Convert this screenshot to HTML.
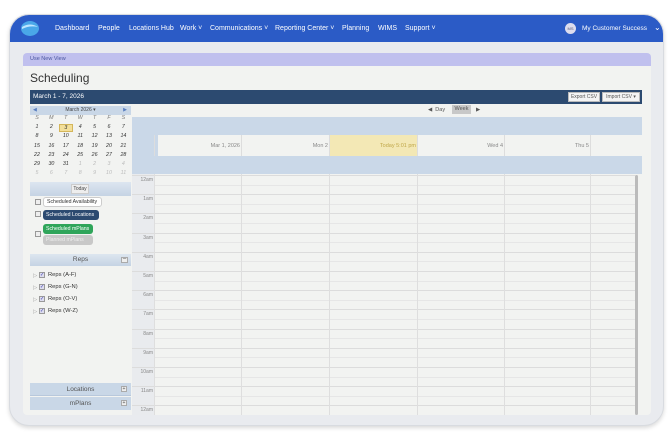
<!DOCTYPE html>
<html><head><meta charset="utf-8"><style>
*{box-sizing:border-box;margin:0;padding:0}
body{width:672px;height:438px;background:#fff;font-family:"Liberation Sans",sans-serif;position:relative;overflow:hidden}
.frame{position:absolute;left:9px;top:14px;width:655px;height:412px;border-radius:20px;background:#e9ebef;border:1px solid #d8dbe0;box-shadow:0 2px 4px rgba(0,0,0,.15);overflow:hidden}
.nav{position:absolute;left:0;top:0;right:0;height:27px;background:#2b5bc6;color:#fff;font-size:7px}
.nav span{position:absolute;top:10px}
.card{position:absolute;left:13px;top:38px;width:628px;height:362px;background:#f2f3f1;border-radius:4px;overflow:hidden}
.abs{position:absolute}
.t{position:absolute;font-size:5.5px;color:#555}
</style></head><body>
<div class="frame">
 <div class="nav">
  <svg class="abs" style="left:10px;top:5px" width="20" height="17" viewBox="0 0 20 17"><ellipse cx="10" cy="8.5" rx="9" ry="7.5" fill="#4aa7e8"/><path d="M2 7 Q10 2 18 7 Q10 5 2 9Z" fill="#bfe6ff"/></svg>
  <span style="left:45px">Dashboard</span><span style="left:88px">People</span><span style="left:119px">Locations Hub</span><span style="left:170px">Work ˅</span><span style="left:200px">Communications ˅</span><span style="left:265px">Reporting Center ˅</span><span style="left:332px">Planning</span><span style="left:368px">WIMS</span><span style="left:395px">Support ˅</span>
  <div class="abs" style="left:555px;top:8px;width:11px;height:11px;border-radius:50%;background:#dde;font-size:4px;color:#557;text-align:center;line-height:11px">MS</div>
  <span style="left:572px;font-size:6.5px">My Customer Success</span><span style="left:644px;top:8px;font-size:8px">⌄</span>
 </div>
 <div class="card">
  <div class="abs" style="left:0;top:0;width:628px;height:13px;background:#c0c0ee;font-size:5.5px;color:#4a55a0;padding:3px 7px">Use New View</div>
  <div class="abs" style="left:7px;top:18px;font-size:12px;color:#333">Scheduling</div>
  <div class="abs" style="left:7px;top:37px;width:612px;height:14px;background:#2c4a70;color:#fff;font-size:6.5px;padding:3px 3px">March 1 - 7, 2026</div>
  <div class="abs" style="left:545px;top:39px;width:32px;height:10px;background:#f4f4f4;border:1px solid #bbb;font-size:5px;color:#555;text-align:center;line-height:8px">Export CSV</div>
  <div class="abs" style="left:579px;top:39px;width:38px;height:10px;background:#f4f4f4;border:1px solid #bbb;font-size:5px;color:#555;text-align:center;line-height:8px">Import CSV ▾</div>
  <div class="abs" style="left:7px;top:53px;width:101px;height:9px;background:#c9d7e7;font-size:5px;color:#444;text-align:center;line-height:9px"><span style="position:absolute;left:3px;color:#5a7fc0">◀</span>March 2026 ▾<span style="position:absolute;right:4px;color:#5a7fc0">▶</span></div>
  <div id="cal" class="abs" style="left:7px;top:62px;width:101px"></div>
  <div class="abs" style="left:7px;top:129px;width:101px;height:14px;background:linear-gradient(#dde6f0,#c5d3e4)"></div>
  <div class="abs" style="left:48px;top:131px;width:18px;height:10px;background:#eee;border:1px solid #ccc;font-size:5px;color:#444;text-align:center;line-height:8px">Today</div>
  <div class="abs" style="left:12px;top:146px;width:6px;height:6px;border:1px solid #999;background:#eee"></div>
  <div class="abs" style="left:20px;top:144px;width:59px;height:10px;border:1px solid #ccc;border-radius:3px;background:#fff;font-size:5.2px;color:#333;line-height:8px;padding-left:3px">Scheduled Availability</div>
  <div class="abs" style="left:12px;top:158px;width:6px;height:6px;border:1px solid #999;background:#eee"></div>
  <div class="abs" style="left:20px;top:157px;width:56px;height:10px;border-radius:3px;background:#2c4a70;font-size:5.2px;color:#fff;line-height:10px;padding-left:3px">Scheduled Locations</div>
  <div class="abs" style="left:12px;top:178px;width:6px;height:6px;border:1px solid #999;background:#eee"></div>
  <div class="abs" style="left:20px;top:171px;width:50px;height:10px;border-radius:3px;background:#2fa55a;font-size:5.2px;color:#fff;line-height:10px;padding-left:3px">Scheduled mPlans</div>
  <div class="abs" style="left:20px;top:182px;width:50px;height:10px;border-radius:3px;background:#c8c8c8;font-size:5.2px;color:#eee;line-height:10px;padding-left:3px">Planned mPlans</div>
  <div class="abs" style="left:7px;top:201px;width:101px;height:12px;background:linear-gradient(#dde6f0,#c5d3e4);font-size:6.5px;color:#555;text-align:center;line-height:12px">Reps<span style="position:absolute;right:3px;top:3px;width:7px;height:6px;border:1px solid #aaa;background:#eee;line-height:3px;font-size:6px">–</span></div>
  <div id="reps"></div>
  <div class="abs" style="left:7px;top:330px;width:101px;height:13px;background:#c9d7e7;border-bottom:1px solid #b8c8dc;font-size:6.5px;color:#555;text-align:center;line-height:13px">Locations<span style="position:absolute;right:4px;top:3px;width:6px;height:6px;border:1px solid #aaa;background:#eee;font-size:5px;line-height:5px">+</span></div>
  <div class="abs" style="left:7px;top:344px;width:101px;height:13px;background:#c9d7e7;font-size:6.5px;color:#555;text-align:center;line-height:13px">mPlans<span style="position:absolute;right:4px;top:3px;width:6px;height:6px;border:1px solid #aaa;background:#eee;font-size:5px;line-height:5px">+</span></div>
  <div class="abs" style="left:405px;top:54px;font-size:5.5px;color:#555">◀ &nbsp;Day</div>
  <div class="abs" style="left:429px;top:52px;width:19px;height:9px;background:#c8c8c8;font-size:5.5px;color:#555;text-align:center;line-height:9px">Week</div>
  <div class="abs" style="left:453px;top:54px;font-size:5.5px;color:#555">▶</div>
  <div class="abs" style="left:109px;top:64px;width:510px;height:18px;background:#cad8e8"></div>
  <div class="abs" style="left:109px;top:82px;width:510px;height:21px;background:#f2f3f1"></div>
  <div class="abs" style="left:109px;top:82px;width:26px;height:21px;background:#cad8e8"></div>
  <div class="abs" style="left:307px;top:82px;width:88px;height:21px;background:#f3e8b5"></div>
  <div class="abs" style="left:109px;top:103px;width:510px;height:18px;background:#cad8e8"></div>
  <div id="days"></div>
  <div id="grid"></div>
  <div class="abs" style="left:612px;top:122px;width:3px;height:240px;background:#bbb;border-radius:2px"></div>
 </div>
</div>
<script>
var c=document.getElementById('cal'),h='';
var rows=[['S','M','T','W','T','F','S'],[1,2,3,4,5,6,7],[8,9,10,11,12,13,14],[15,16,17,18,19,20,21],[22,23,24,25,26,27,28],[29,30,31,1,2,3,4],[5,6,7,8,9,10,11]];
rows.forEach(function(r,i){r.forEach(function(d,j){var g=(i==5&&j>2)||i==6;var st='position:absolute;left:'+(j*14.4)+'px;top:'+(i*9.2)+'px;width:14px;text-align:center;font-size:5.3px;font-style:italic;color:'+(g?'#bbb':(i==0?'#777':'#333'));if(i==1&&j==2)st+=';background:#f3df99;border:1px solid #d4b65a;height:8px';h+='<div style="'+st+'">'+d+'</div>';});});
c.innerHTML=h;
var r='',names=['Reps (A-F)','Reps (G-N)','Reps (O-V)','Reps (W-Z)'];
names.forEach(function(n,i){var y=219+i*12;r+='<div class="t" style="left:10px;top:'+(y+1)+'px;color:#999">▷</div><div class="abs" style="left:16px;top:'+y+'px;width:6px;height:6px;border:1px solid #999;background:#dde;font-size:5px;color:#33a;line-height:5px">✓</div><div class="t" style="left:25px;top:'+y+'px;font-size:5.8px;color:#333">'+n+'</div>';});
document.getElementById('reps').innerHTML=r;
var cols=[132,219,307,395,482,568,612],lab=['Mar 1, 2026','Mon 2','Today 5:01 pm','Wed 4','Thu 5',''],d='';
for(var i=0;i<6;i++){d+='<div class="t" style="left:'+cols[i]+'px;top:90px;width:'+(cols[i+1]-cols[i]-2)+'px;text-align:right;color:'+(i==2?'#c0a84a':'#888')+'">'+lab[i]+'</div>';d+='<div class="abs" style="left:'+(cols[i]-1)+'px;top:82px;width:1px;height:21px;background:#ddd"></div>';}
document.getElementById('days').innerHTML=d;
var g='<div class="abs" style="left:109px;top:121px;width:23px;height:241px;background:#e9ebee"></div>';
for(var k=0;k<13;k++){var y=122+k*19.2;g+='<div class="t" style="left:112px;top:'+(y+2)+'px;width:18px;text-align:right;color:#888;font-size:5px">'+(k==0?'12am':k+'am')+'</div>';g+='<div class="abs" style="left:109px;top:'+y+'px;width:503px;height:1px;background:#dcdcdc"></div><div class="abs" style="left:132px;top:'+(y+9.6)+'px;width:480px;height:1px;background:#e6e6e6"></div>';}
for(var i=0;i<6;i++)g+='<div class="abs" style="left:'+(cols[i]-1)+'px;top:121px;width:1px;height:241px;background:#dedede"></div>';
document.getElementById('grid').innerHTML=g;
</script>
</body></html>
